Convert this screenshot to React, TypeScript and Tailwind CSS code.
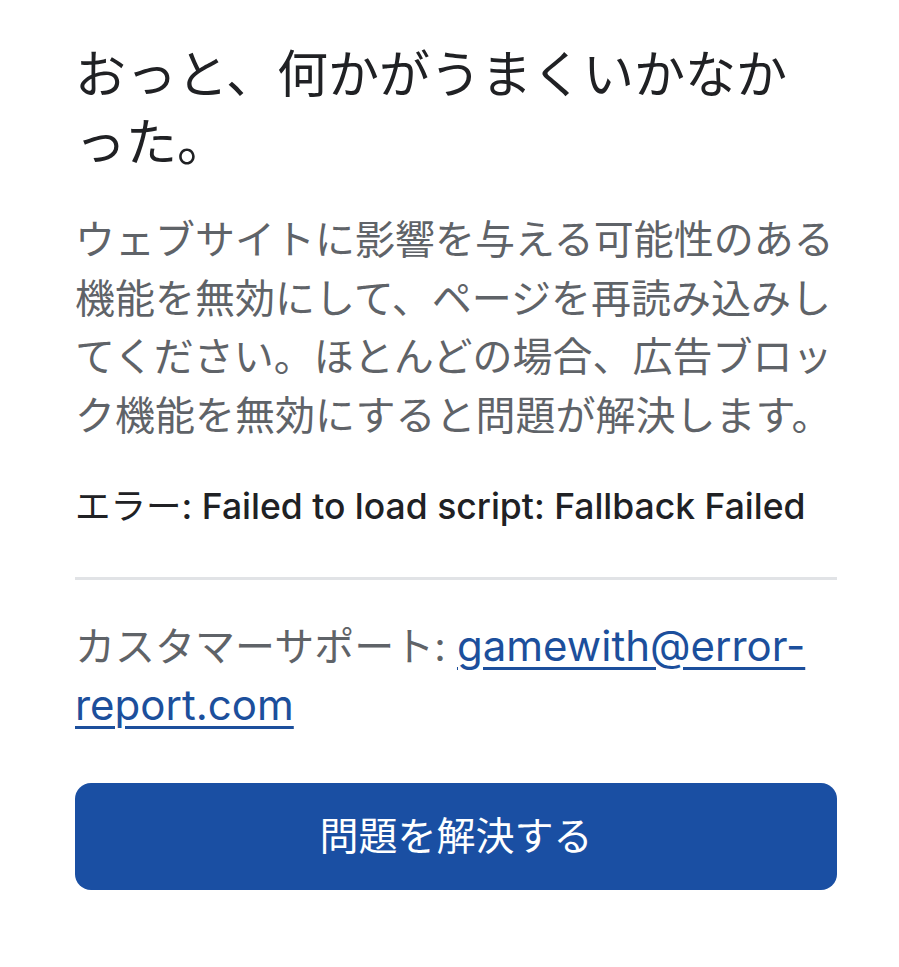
import React from "react";

const font = "font-['Inter','Noto_Sans_CJK_JP',sans-serif]";

export default function App() {
  return (
    <div className={`min-h-screen bg-white px-[75px] pt-[41px] ${font}`}>
      <div className="w-[762px]">
        <h1 className="text-[51px] font-normal leading-[68px] text-[#202124]">
          おっと、何かがうまくいかなかった。
        </h1>
        <p className="mt-[34px] text-[40px] leading-[58.5px] text-[#5f6368]">
          ウェブサイトに影響を与える可能性のある機能を無効にして、ページを再読み込みしてください。ほとんどの場合、広告ブロック機能を無効にすると問題が解決します。
        </p>
        <p className="mt-[38px] text-[35.5px] font-medium leading-[48px] text-[#202124]">
          <span className="font-normal">エラー</span>: Failed to load script: Fallback Failed
        </p>
        <div className="mt-[46px] h-[3px] bg-[#e1e3e6]" />
        <p className="mt-[37px] text-[40px] leading-[58px] text-[#5f6368]">
          カスタマーサポート:{" "}
          <a
            href="#"
            className="text-[42px] leading-[58px] text-[#1c4f9c] underline decoration-[3px] underline-offset-[6px]"
          >
            gamewith@error-report.com
          </a>
        </p>
        <button className="mt-[48px] flex h-[107px] w-full items-center justify-center rounded-[16px] bg-[#1a4fa3] text-[39px] text-white">
          問題を解決する
        </button>
      </div>
    </div>
  );
}
